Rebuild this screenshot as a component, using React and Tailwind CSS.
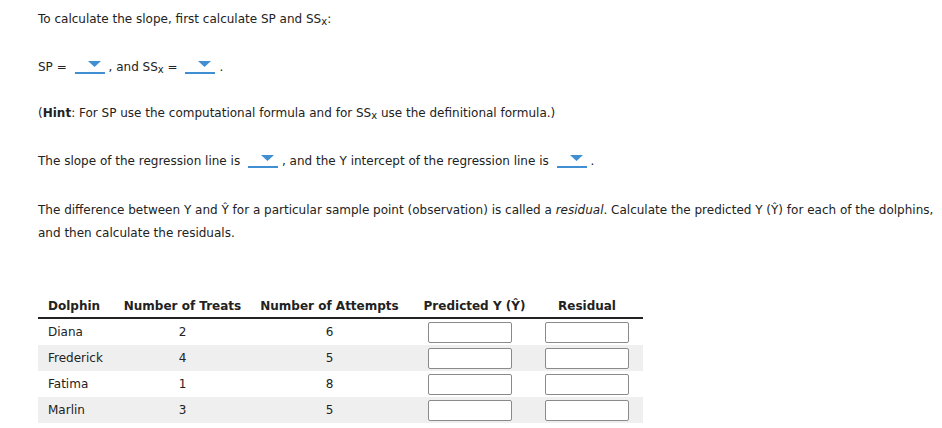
function Drop() {
  return (
    <span className="mx-[4px] inline-block h-[14px] w-[30px] border-b-2 border-[#3f8fd2] align-[-3px]">
      <svg className="ml-[13px] mt-[1px] block" width="13" height="6" viewBox="0 0 13 6">
        <polygon points="0,0 13,0 6.5,6" fill="#3f8fd2" />
      </svg>
    </span>
  );
}

function Sx() {
  return (
    <>
      SS<span className="relative top-[2px] text-[10px] leading-none">x</span>
    </>
  );
}

const rows = [
  { name: "Diana", treats: 2, attempts: 6 },
  { name: "Frederick", treats: 4, attempts: 5 },
  { name: "Fatima", treats: 1, attempts: 8 },
  { name: "Marlin", treats: 3, attempts: 5 },
];

function Box() {
  return <span className="block h-[21px] w-[84px] rounded-[2px] border border-[#8a8a8a] bg-white" />;
}

export default function App() {
  return (
    <div className="min-h-[428px] w-[942px] overflow-hidden bg-white pl-[38px] text-[12px] leading-[23px] text-[#222]" style={{ fontFamily: "Verdana, 'DejaVu Sans', sans-serif" }}>
      <p className="h-[23px] mt-[8px]">
        To calculate the slope, first calculate SP and <Sx />:
      </p>
      <p className="mt-[25px] h-[23px]">
        SP = <Drop />, and <Sx /> = <Drop />.
      </p>
      <p className="mt-[23px] h-[23px]">
        (<b>Hint</b>: For SP use the computational formula and for <Sx /> use the definitional formula.)
      </p>
      <p className="mt-[25px] h-[23px]">
        The slope of the regression line is <Drop />, and the Y intercept of the regression line is <Drop />.
      </p>
      <p className="mt-[26px] w-[904px]">
        The difference between Y and Ŷ for a particular sample point (observation) is called a <i>residual</i>. Calculate the predicted Y (Ŷ) for each of the dolphins, and then calculate the residuals.
      </p>

      <div className="mt-[47px] w-[605px]">
        <div className="flex h-[27px] items-center border-b-2 border-[#222] pt-[3px] font-bold">
          <div className="w-[76px] pl-[10px]">Dolphin</div>
          <div className="w-[137px] text-center">Number of Treats</div>
          <div className="w-[157px] text-center">Number of Attempts</div>
          <div className="w-[133px] text-center">Predicted Y (Ŷ)</div>
          <div className="w-[102px] pr-[10px] text-center">Residual</div>
        </div>
        {rows.map((r, i) => (
          <div key={r.name} className={"flex h-[26px] items-center " + (i % 2 ? "bg-[#efefef]" : "bg-white")}>
            <div className="w-[76px] pl-[10px]">{r.name}</div>
            <div className="w-[137px] text-center">{r.treats}</div>
            <div className="w-[157px] text-center">{r.attempts}</div>
            <div className="w-[133px] pl-[20px]">
              <Box />
            </div>
            <div className="w-[102px] pl-[4px]">
              <Box />
            </div>
          </div>
        ))}
      </div>
    </div>
  );
}
